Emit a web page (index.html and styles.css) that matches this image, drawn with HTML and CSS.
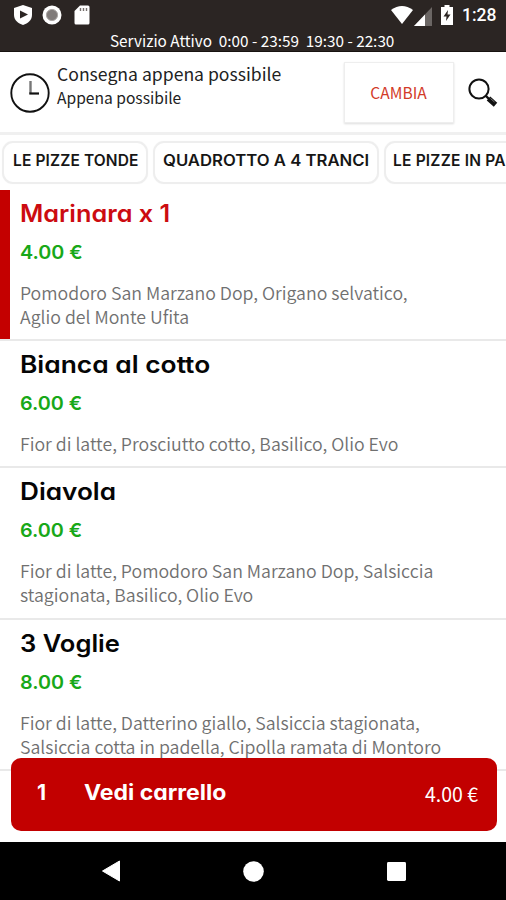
FILE: index.html
```html
<!DOCTYPE html>
<html lang="it">
<head>
<meta charset="utf-8">
<title>Menu</title>
<link rel="stylesheet" href="styles.css">
</head>
<body>
<div class="screen">
  <header class="status">
    <div class="status-row">
      <div class="status-left">
        <svg width="20" height="22" viewBox="0 0 20 22"><path d="M10 1 19 4V11C19 16 15 19.500 10 21 5 19.500 1 16 1 11V4Z" fill="#fff"/><path d="M7 6.500 15 10.500 7 14.500Z" fill="#2b2523"/></svg>
        <svg width="20" height="20" viewBox="0 0 20 20"><circle cx="10" cy="10" r="9.500" fill="#fff"/><circle cx="10" cy="10" r="5.600" fill="#817c7a" stroke="#aaa6a4"/></svg>
        <svg width="16" height="20" viewBox="0 0 16 20"><path d="M6 .5H14Q15.500 .5 15.500 2V18Q15.500 19.500 14 19.500H2Q.5 19.500 .5 18V6Z" fill="#fff"/><path d="M6.500 3V6M9.500 3V6M12.500 3V6" stroke="#77716e" stroke-width="1.400"/></svg>
      </div>
      <div class="status-right">
        <svg width="22" height="18" viewBox="0 0 22 18"><path d="M0 4Q11-4 22 4L11 18Z" fill="#fff"/></svg>
        <svg class="signal" width="18" height="19" viewBox="0 0 18 19"><path d="M18 0V19H0Z" fill="#6b6664"/><path d="M11 7.400V19H0Z" fill="#fff"/></svg>
        <svg class="battery" width="12" height="20" viewBox="0 0 12 20"><path d="M3.500 0H8.500V2H12V20H0V2H3.500Z" fill="#fff"/><path d="M7 5 2.500 11.500H5.500L5 16 9.500 9.500H6.500Z" fill="#2b2523"/></svg>
        <span class="clock">1:28</span>
      </div>
    </div>
    <div class="service">Servizio Attivo&nbsp; 0:00 - 23:59&nbsp; 19:30 - 22:30</div>
  </header>

  <section class="delivery">
    <svg class="time-icon" width="40" height="40" viewBox="0 0 40 40" fill="none" stroke="#111"><circle cx="20" cy="20" r="18.700" stroke-width="1.900"/><path d="M20.500 8V20.500" stroke="#777" stroke-width="2.400"/><path d="M19.300 20.500H29" stroke-width="2.200"/></svg>
    <div class="delivery-text">
      <div class="delivery-title"><span>Consegna appena possibile</span></div>
      <div class="delivery-sub"><span>Appena possibile</span></div>
    </div>
    <button class="change">CAMBIA</button>
    <svg class="search" width="30" height="30" viewBox="0 0 30 30" fill="none" stroke="#111"><circle cx="11" cy="11" r="9.600" stroke-width="2"/><path d="M18 18 21 21" stroke-width="2.400"/><path d="M20.500 20.500 27.500 26.800" stroke-width="5.200"/><path d="M22.500 20.500 26.500 24" stroke="#777" stroke-width="1"/></svg>
  </section>

  <nav class="tabs">
    <div class="tab tab-a"><span>LE PIZZE TONDE</span></div>
    <div class="tab tab-b"><span>QUADROTTO A 4 TRANCI</span></div>
    <div class="tab tab-c"><span>LE PIZZE IN PALA</span></div>
  </nav>

  <main class="list">
    <article class="item selected">
      <h2 class="t1">Marinara x 1</h2>
      <div class="price">4.00 €</div>
      <p>Pomodoro San Marzano Dop, Origano selvatico,<br>Aglio del Monte Ufita</p>
    </article>
    <article class="item">
      <h2 class="t2">Bianca al cotto</h2>
      <div class="price">6.00 €</div>
      <p>Fior di latte, Prosciutto cotto, Basilico, Olio Evo</p>
    </article>
    <article class="item">
      <h2 class="t3">Diavola</h2>
      <div class="price">6.00 €</div>
      <p>Fior di latte, Pomodoro San Marzano Dop, Salsiccia<br>stagionata, Basilico, Olio Evo</p>
    </article>
    <article class="item">
      <h2 class="t4">3 Voglie</h2>
      <div class="price">8.00 €</div>
      <p>Fior di latte, Datterino giallo, Salsiccia stagionata,<br>Salsiccia cotta in padella, Cipolla ramata di Montoro</p>
    </article>
  </main>

  <div class="cart">
    <span class="cart-count">1</span>
    <span class="cart-label">Vedi carrello</span>
    <span class="cart-total">4.00 €</span>
  </div>

  <footer class="navbar">
    <svg width="18" height="22" viewBox="0 0 18 22"><path d="M17.500 1V21L.5 11Z" fill="#fff" stroke="#fff" stroke-linejoin="round"/></svg>
    <svg width="21" height="21" viewBox="0 0 22 22"><circle cx="11" cy="11" r="10.800" fill="#fff"/></svg>
    <svg width="19" height="19" viewBox="0 0 20 20"><rect width="20" height="20" rx="1.500" fill="#fff"/></svg>
  </footer>
</div>
</body>
</html>
```
FILE: styles.css
```css
* { box-sizing: border-box; }
body {
  margin: 0;
  font-family: "Noto Sans CJK SC", "Noto Sans", sans-serif;
  color: #222;
  background: #fff;
}
svg { display: block; flex: none; }
.screen {
  position: relative;
  display: flex;
  flex-direction: column;
  width: 506px;
  height: 900px;
  overflow: hidden;
}
.status {
  flex: none;
  height: 52px;
  background: #2b2523;
  border-bottom: 1px solid #171210;
  color: #fff;
}
.status-row {
  display: flex;
  justify-content: space-between;
  height: 30px;
  padding: 0 8px 0 13px;
}
.status-left { display: flex; align-items: center; gap: 9px; }
.status-left svg:nth-child(2) { margin-right: 3px; }
.status-right { display: flex; align-items: center; }
.signal { margin-left: 1px; margin-top: 3px; }
.battery { margin-left: 9px; }
.clock {
  width: 36px;
  margin-left: 9px;
  font: 500 17.500px/32px Roboto, sans-serif;
  white-space: nowrap;
}
.service {
  padding-left: 110px;
  font-size: 15.300px;
  line-height: 20px;
  white-space: nowrap;
}
.delivery {
  flex: none;
  display: flex;
  height: 83px;
  padding-left: 10px;
  border-bottom: 3px solid #f0f0f0;
}
.time-icon { margin-top: 21px; }
.delivery-text {
  width: 287px;
  padding: 9px 0 0 7px;
  white-space: nowrap;
}
.delivery-title { font-size: 17.600px; line-height: 26px; }
.delivery-sub { font-size: 15.600px; line-height: 21px; }
.change {
  width: 110px;
  height: 61px;
  margin: 10px 0 0 7px;
  padding: 0 1px 2px 0;
  border: 1px solid #eee;
  background: #fff;
  box-shadow: 0 1px 2px #ddd;
  color: #d23b28;
  font: 400 15.600px/24px "Noto Sans CJK SC", sans-serif;
}
.search { margin: 26px 0 0 14px; }
.tabs {
  flex: none;
  display: flex;
  gap: 5px;
  height: 55px;
  padding: 6px 0 0 2px;
}
.tab {
  flex: none;
  height: 43px;
  padding-left: 9px;
  border: 2px solid #eee;
  border-radius: 11px;
  box-shadow: 0 0 1px #eee;
  font: 600 15.500px/35px Inter, sans-serif;
  color: #161616;
  white-space: nowrap;
}
.tab span { display: inline-block; transform-origin: left; }
.tab-a { width: 146px; letter-spacing: .12px; }
.tab-b { width: 226px; padding-left: 8px; }
.tab-b span { transform: scaleX(1.077); }
.tab-c { width: 170px; padding-left: 7px; letter-spacing: .2px; }
.list { flex: none; }
.item {
  padding: 9px 20px 11.200px;
  border-bottom: 2px solid #e9e9e9;
}
.item.selected { box-shadow: inset 10px 0 #c40000; }
.item h2 {
  width: max-content;
  margin: 0;
  font: 600 24px/30px Inter, sans-serif;
  font-feature-settings: "cv11";
  color: #050505;
  transform-origin: left;
}
.item.selected h2 { color: #cc0b10; }
.item .t1 { transform: scaleX(1.053); }
.item .t2 { transform: scaleX(1.098); }
.item .t3 { transform: scaleX(1.090); }
.item .t4 { transform: scaleX(1.065); }
.price {
  width: max-content;
  margin-top: 12px;
  font: 600 19px/24px Inter, sans-serif;
  color: #18a818;
  transform: scaleX(1.040);
  transform-origin: left;
}
.item p {
  margin: 15px 0 0;
  font-size: 17.730px;
  font-weight: 350;
  line-height: 24px;
  color: #707070;
  white-space: nowrap;
}
.cart {
  position: absolute;
  left: 11px;
  top: 758px;
  display: flex;
  width: 486px;
  height: 73px;
  padding: 0 19px 0 26px;
  border-radius: 10px;
  background: #c20000;
  color: #fff;
  font: 700 21px/70px Inter, sans-serif;
  font-feature-settings: "cv11";
}
.cart-count { width: 47px; }
.cart-label { transform: scaleX(1.095); transform-origin: left; }
.cart-total {
  margin-left: auto;
  font: 400 19.500px/71px "Noto Sans CJK SC", sans-serif;
}
.navbar {
  position: absolute;
  left: 0;
  top: 842px;
  display: flex;
  align-items: center;
  gap: 123px;
  width: 506px;
  height: 58px;
  padding-left: 102px;
  background: #000;
}
```
